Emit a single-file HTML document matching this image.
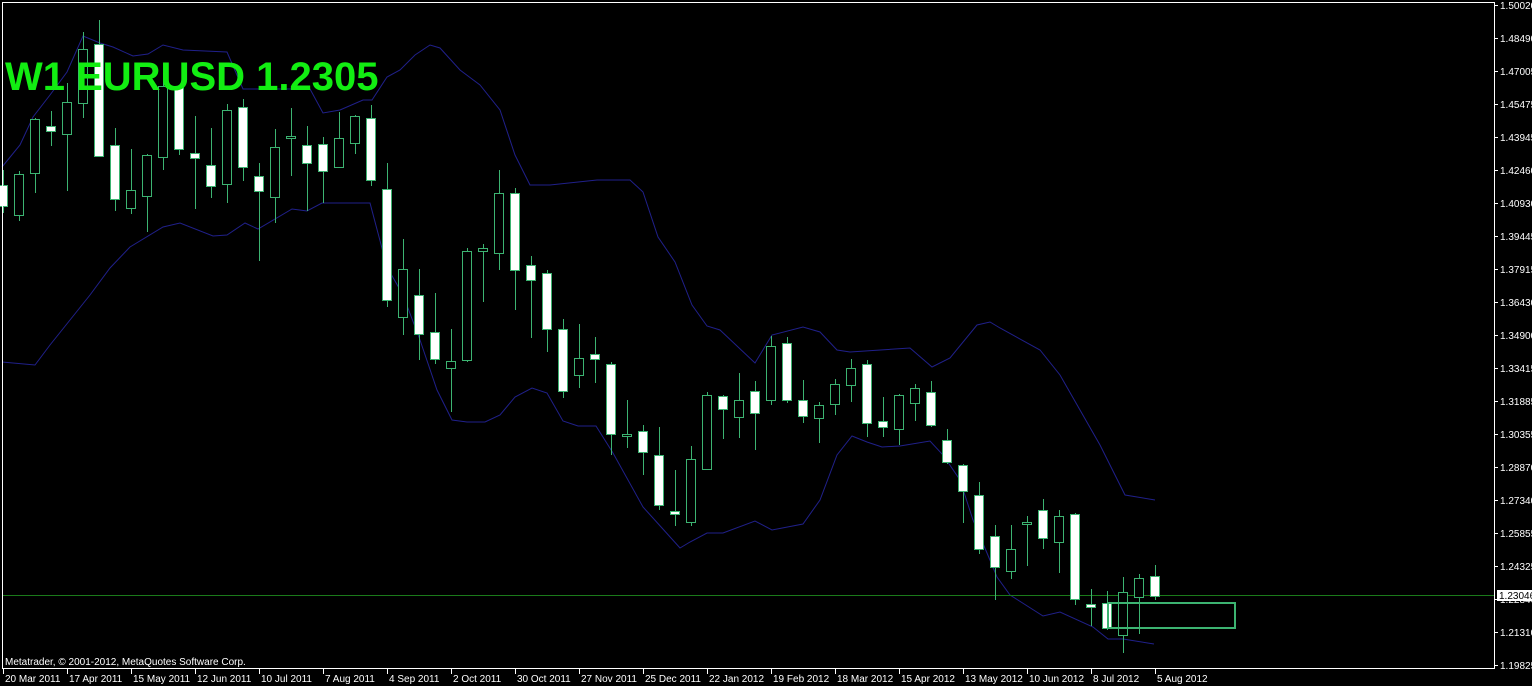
<!DOCTYPE html>
<html><head><meta charset="utf-8"><style>
html,body{margin:0;padding:0;background:#000;width:1532px;height:686px;overflow:hidden}
svg{display:block}
text{font-family:"Liberation Sans",sans-serif}
</style></head><body>
<svg width="1532" height="686" viewBox="0 0 1532 686" xmlns="http://www.w3.org/2000/svg">
<rect width="1532" height="686" fill="#000"/>
<g fill="none" stroke="#20208a" stroke-width="1">
<polyline points="2,167 20,145 33,117 50,95 67,72 83,36 100,43 113,47 133,56 148,54 163,45 183,50 227,52 243,89 310,89 323,113 340,110 363,100 372,100 387,77 400,70 415,55 430,45 440,48 460,70 480,85 500,110 515,155 530,185 550,185 597,180 630,180 643,192 658,237 675,262 692,305 707,326 720,330 755,363 772,335 803,327 820,332 837,350 850,352 910,348 932,367 950,358 977,325 990,322 1000,328 1040,350 1060,375 1080,410 1100,445 1125,495 1155,500"/>
<polyline points="2,362 35,365 50,345 70,320 90,295 110,268 130,247 163,227 180,223 213,236 227,235 245,223 258,229 292,209 307,211 322,203 370,203 387,267 403,295 420,340 437,390 452,420 467,422 485,422 500,415 515,397 532,388 547,393 563,421 578,426 596,426 613,453 643,507 662,528 680,548 690,542 707,533 723,533 755,521 772,530 803,524 820,500 837,455 852,436 867,442 882,447 900,446 930,441 943,455 960,480 973,520 987,553 997,577 1010,595 1043,616 1060,612 1093,627 1108,639 1123,639 1154,644"/>
</g>
<line x1="3" y1="595.5" x2="1494" y2="595.5" stroke="#1a7a1a"/>
<g stroke="#3cb371" stroke-width="1">
<path d="M3.5 170V213M19.5 171V221M35.5 118V193M51.5 111V146M67.5 83V191M83.5 32V118M99.5 20V157M115.5 128V211M131.5 149V214M147.5 154V232M163.5 73V170M179.5 87V155M195.5 116V209M211.5 128V198M227.5 104V203M243.5 99V181M259.5 163V261M275.5 129V223M291.5 108V176M307.5 126V211M323.5 137V203M339.5 112V168M355.5 115V154M371.5 105V186M387.5 163V307M403.5 239V335M419.5 269V360M435.5 293V364M451.5 329V412M467.5 248V362M483.5 244V302M499.5 170V270M515.5 188V310M531.5 256V338M547.5 270V352M563.5 319V398M579.5 324V388M595.5 337V383M611.5 362V455M627.5 400V448M643.5 425V475M659.5 427V510M675.5 470V526M691.5 446V526M707.5 392V470M723.5 395V439M739.5 373V438M755.5 381V450M771.5 336V405M787.5 337V403M803.5 380V423M819.5 402V443M835.5 379V415M851.5 359V402M867.5 360V437M883.5 397V437M899.5 394V445M915.5 384V421M931.5 381V427M947.5 429V464M963.5 464V523M979.5 482V554M995.5 525V600M1011.5 525V579M1027.5 516V566M1043.5 499V549M1059.5 510V573M1075.5 513V605M1091.5 589V626M1107.5 591V630M1123.5 577V653M1139.5 574V634M1155.5 565V600"/>
<g fill="#fff">
<rect x="-1.5" y="185.5" width="9" height="21"/>
<rect x="46.5" y="126.5" width="9" height="5"/>
<rect x="94.5" y="44.5" width="9" height="112"/>
<rect x="110.5" y="145.5" width="9" height="54"/>
<rect x="174.5" y="87.5" width="9" height="62"/>
<rect x="190.5" y="153.5" width="9" height="5"/>
<rect x="206.5" y="165.5" width="9" height="21"/>
<rect x="238.5" y="107.5" width="9" height="60"/>
<rect x="254.5" y="176.5" width="9" height="15"/>
<rect x="302.5" y="145.5" width="9" height="18"/>
<rect x="318.5" y="144.5" width="9" height="27"/>
<rect x="366.5" y="118.5" width="9" height="62"/>
<rect x="382.5" y="189.5" width="9" height="111"/>
<rect x="414.5" y="295.5" width="9" height="39"/>
<rect x="430.5" y="332.5" width="9" height="27"/>
<rect x="510.5" y="193.5" width="9" height="77"/>
<rect x="526.5" y="265.5" width="9" height="15"/>
<rect x="542.5" y="273.5" width="9" height="56"/>
<rect x="558.5" y="329.5" width="9" height="62"/>
<rect x="590.5" y="354.5" width="9" height="5"/>
<rect x="606.5" y="364.5" width="9" height="70"/>
<rect x="638.5" y="431.5" width="9" height="21"/>
<rect x="654.5" y="455.5" width="9" height="50"/>
<rect x="670.5" y="511.5" width="9" height="3"/>
<rect x="718.5" y="396.5" width="9" height="13"/>
<rect x="750.5" y="391.5" width="9" height="22"/>
<rect x="782.5" y="343.5" width="9" height="57"/>
<rect x="798.5" y="400.5" width="9" height="16"/>
<rect x="862.5" y="364.5" width="9" height="59"/>
<rect x="878.5" y="421.5" width="9" height="6"/>
<rect x="926.5" y="392.5" width="9" height="33"/>
<rect x="942.5" y="440.5" width="9" height="22"/>
<rect x="958.5" y="465.5" width="9" height="26"/>
<rect x="974.5" y="495.5" width="9" height="54"/>
<rect x="990.5" y="536.5" width="9" height="31"/>
<rect x="1038.5" y="510.5" width="9" height="28"/>
<rect x="1070.5" y="514.5" width="9" height="85"/>
<rect x="1086.5" y="604.5" width="9" height="3"/>
<rect x="1102.5" y="603.5" width="9" height="25"/>
<rect x="1150.5" y="576.5" width="9" height="20"/>
</g>
<g fill="#000">
<rect x="14.5" y="174.5" width="9" height="41"/>
<rect x="30.5" y="119.5" width="9" height="54"/>
<rect x="62.5" y="102.5" width="9" height="32"/>
<rect x="78.5" y="49.5" width="9" height="54"/>
<rect x="126.5" y="190.5" width="9" height="18"/>
<rect x="142.5" y="155.5" width="9" height="41"/>
<rect x="158.5" y="86.5" width="9" height="71"/>
<rect x="222.5" y="110.5" width="9" height="74"/>
<rect x="270.5" y="147.5" width="9" height="50"/>
<rect x="286.5" y="136.5" width="9" height="2"/>
<rect x="334.5" y="138.5" width="9" height="29"/>
<rect x="350.5" y="116.5" width="9" height="27"/>
<rect x="398.5" y="269.5" width="9" height="48"/>
<rect x="446.5" y="361.5" width="9" height="7"/>
<rect x="462.5" y="251.5" width="9" height="109"/>
<rect x="478.5" y="248.5" width="9" height="3"/>
<rect x="494.5" y="193.5" width="9" height="60"/>
<rect x="574.5" y="358.5" width="9" height="17"/>
<rect x="622.5" y="434.5" width="9" height="2"/>
<rect x="686.5" y="459.5" width="9" height="63"/>
<rect x="702.5" y="395.5" width="9" height="74"/>
<rect x="734.5" y="400.5" width="9" height="17"/>
<rect x="766.5" y="346.5" width="9" height="54"/>
<rect x="814.5" y="405.5" width="9" height="13"/>
<rect x="830.5" y="384.5" width="9" height="20"/>
<rect x="846.5" y="368.5" width="9" height="17"/>
<rect x="894.5" y="395.5" width="9" height="34"/>
<rect x="910.5" y="388.5" width="9" height="15"/>
<rect x="1006.5" y="549.5" width="9" height="22"/>
<rect x="1022.5" y="522.5" width="9" height="2"/>
<rect x="1054.5" y="516.5" width="9" height="26"/>
<rect x="1118.5" y="592.5" width="9" height="43"/>
<rect x="1134.5" y="578.5" width="9" height="19"/>
</g>
</g>
<rect x="1108" y="603" width="127" height="25" fill="none" stroke="#3cb371" stroke-width="2"/>
<text x="5" y="90" font-size="40" font-weight="bold" fill="#12ee12">W1 EURUSD 1.2305</text>
<path d="M2.5 669V2.5H1494.5V668.5H2.5" fill="none" stroke="#fff"/>
<text x="5" y="665" font-size="10" fill="#fff">Metatrader, © 2001-2012, MetaQuotes Software Corp.</text>
<g stroke="#fff">
<path d="M1494 5.5h4M1494 38.5h4M1494 71.5h4M1494 104.5h4M1494 137.5h4M1494 170.5h4M1494 203.5h4M1494 236.5h4M1494 269.5h4M1494 302.5h4M1494 335.5h4M1494 368.5h4M1494 401.5h4M1494 434.5h4M1494 467.5h4M1494 500.5h4M1494 533.5h4M1494 566.5h4M1494 599.5h4M1494 632.5h4M1494 665.5h4"/>
<path d="M3.5 669v5M67.5 669v5M131.5 669v5M195.5 669v5M259.5 669v5M323.5 669v5M387.5 669v5M451.5 669v5M515.5 669v5M579.5 669v5M643.5 669v5M707.5 669v5M771.5 669v5M835.5 669v5M899.5 669v5M963.5 669v5M1027.5 669v5M1091.5 669v5M1155.5 669v5"/>
</g>
<g font-size="10" fill="#fff">
<text x="1500" y="9">1.50020</text><text x="1500" y="42">1.48490</text><text x="1500" y="75">1.47005</text><text x="1500" y="108">1.45475</text><text x="1500" y="141">1.43945</text><text x="1500" y="174">1.42460</text><text x="1500" y="207">1.40930</text><text x="1500" y="240">1.39445</text><text x="1500" y="273">1.37915</text><text x="1500" y="306">1.36430</text><text x="1500" y="339">1.34900</text><text x="1500" y="372">1.33415</text><text x="1500" y="405">1.31885</text><text x="1500" y="438">1.30355</text><text x="1500" y="471">1.28870</text><text x="1500" y="504">1.27340</text><text x="1500" y="537">1.25855</text><text x="1500" y="570">1.24325</text><text x="1500" y="603">1.22840</text><text x="1500" y="636">1.21310</text><text x="1500" y="669">1.19825</text>
</g>
<rect x="1497" y="590" width="35" height="11" fill="#fff"/>
<text x="1499" y="599" font-size="10" fill="#000">1.23046</text>
<g font-size="10" fill="#fff">
<text x="5" y="682">20 Mar 2011</text><text x="69" y="682">17 Apr 2011</text><text x="133" y="682">15 May 2011</text><text x="197" y="682">12 Jun 2011</text><text x="261" y="682">10 Jul 2011</text><text x="325" y="682">7 Aug 2011</text><text x="389" y="682">4 Sep 2011</text><text x="453" y="682">2 Oct 2011</text><text x="517" y="682">30 Oct 2011</text><text x="581" y="682">27 Nov 2011</text><text x="645" y="682">25 Dec 2011</text><text x="709" y="682">22 Jan 2012</text><text x="773" y="682">19 Feb 2012</text><text x="837" y="682">18 Mar 2012</text><text x="901" y="682">15 Apr 2012</text><text x="965" y="682">13 May 2012</text><text x="1029" y="682">10 Jun 2012</text><text x="1093" y="682">8 Jul 2012</text><text x="1157" y="682">5 Aug 2012</text>
</g>
</svg>
</body></html>
